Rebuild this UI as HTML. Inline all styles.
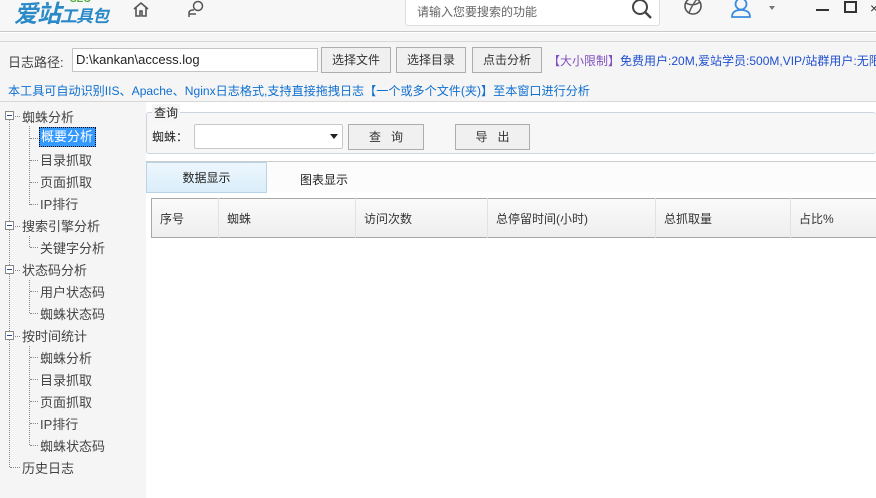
<!DOCTYPE html>
<html><head><meta charset="utf-8"><style>
*{margin:0;padding:0;box-sizing:border-box}
body{width:876px;height:498px;overflow:hidden;background:#fff;font-family:"Liberation Sans","Noto Sans CJK SC",sans-serif;font-size:12px;color:#333;position:relative}
.a{position:absolute}
.btn{position:absolute;border:1px solid #adadad;background:#f0f0f0;text-align:center;font-size:12px;color:#333;line-height:24px;height:26px}
.t{position:absolute;font-size:13px;color:#444;white-space:nowrap}
.dh{position:absolute;border-top:1px dotted #888;width:8px}
.dv{position:absolute;border-left:1px dotted #888}
.bx{position:absolute;width:9px;height:9px;border:1px solid #888;background:#fff}
.bx:after{content:"";position:absolute;left:1px;top:3px;width:5px;height:1px;background:#2a4a9a}
th{font-weight:normal;text-align:left;padding-left:8px;font-size:12px;border-right:1px solid #e2e2e2}
</style></head><body>
<div class="a" style="left:0;top:0;width:876px;height:32px;background:#f7f7f7;border-bottom:1px solid #c8c8c8"></div>
<div class="a" style="left:14px;top:-6px;font-size:24px;font-weight:bold;font-style:italic;color:#2a8ac8;letter-spacing:-1px">爱站<span style="font-size:17px">工具包</span></div>
<div class="a" style="left:70px;top:-6px;font-size:10px;font-weight:bold;color:#4caa3a">SEO</div>
<svg class="a" style="left:132px;top:1px" width="18" height="16" viewBox="0 0 18 16"><path d="M2 8L9 2L16 8M4 6V15H8V10H10V15H14V6" fill="none" stroke="#555" stroke-width="1.6"/></svg>
<svg class="a" style="left:186px;top:0" width="20" height="18" viewBox="0 0 20 18"><circle cx="12" cy="6" r="4.5" fill="none" stroke="#555" stroke-width="1.5"/><path d="M3 17V13Q3 10 7 10H8M3 14H10" fill="none" stroke="#555" stroke-width="1.5"/></svg>
<div class="a" style="left:405px;top:-2px;width:255px;height:28px;background:#fff;border:1px solid #ddd;border-radius:3px"></div>
<div class="a" style="left:417px;top:3px;font-size:12px;color:#666">请输入您要搜索的功能</div>
<svg class="a" style="left:630px;top:-2px" width="24" height="24" viewBox="0 0 24 24"><circle cx="10" cy="9" r="7" fill="none" stroke="#444" stroke-width="2"/><path d="M15 14L21 20" stroke="#444" stroke-width="2.4"/></svg>
<svg class="a" style="left:683px;top:-3px" width="20" height="22" viewBox="0 0 20 22"><circle cx="10" cy="9" r="8" fill="none" stroke="#555" stroke-width="1.6"/><path d="M3 6Q10 10 17 5M6 16Q9 8 14 2" fill="none" stroke="#555" stroke-width="1.4"/></svg>
<svg class="a" style="left:730px;top:-3px" width="22" height="22" viewBox="0 0 22 22"><circle cx="11" cy="7" r="5.5" fill="none" stroke="#3c8de0" stroke-width="1.8"/><path d="M2 20Q2 13 11 13Q20 13 20 20Z" fill="none" stroke="#3c8de0" stroke-width="1.8"/></svg>
<div class="a" style="left:769px;top:6px;border:3px solid transparent;border-top:4px solid #777"></div>
<div class="a" style="left:816px;top:9px;width:13px;height:2px;background:#333"></div>
<div class="a" style="left:844px;top:1px;width:13px;height:12px;border:2px solid #333"></div>
<div class="a" style="left:870px;top:0;font-size:14px;color:#333">×</div>
<div class="a" style="left:0;top:33px;width:876px;height:465px;background:#f5f5f5"></div>
<div class="a" style="left:0;top:41px;width:876px;height:1px;background:#d8d8d8"></div>
<div class="a" style="left:8px;top:52px;font-size:13px;color:#444">日志路径:</div>
<div class="a" style="left:72px;top:48px;width:246px;height:24px;background:#fff;border:1px solid #c4c4c4;padding-left:3px;font-size:13px;line-height:22px;color:#222">D:\kankan\access.log</div>
<div class="btn" style="left:321px;top:47px;width:70px">选择文件</div>
<div class="btn" style="left:396px;top:47px;width:70px">选择目录</div>
<div class="btn" style="left:472px;top:47px;width:70px">点击分析</div>
<div class="a" style="left:548px;top:52px;font-size:12px;color:#2050d0;white-space:nowrap"><span style="color:#8050c0">【大小限制】</span>免费用户:20M,爱站学员:500M,VIP/站群用户:无限</div>
<div class="a" style="left:8px;top:82px;font-size:12.1px;color:#1070d0;white-space:nowrap">本工具可自动识别IIS、Apache、Nginx日志格式,支持直接拖拽日志【一个或多个文件(夹)】至本窗口进行分析</div>
<div class="a" style="left:0;top:101px;width:876px;height:1px;background:#d8d8d8"></div>
<div class="a" style="left:146px;top:102px;width:730px;height:396px;background:#fff"></div>
<div class="a" style="left:146px;top:112px;width:730px;height:42px;border:1px solid #cdd6de;border-right:none;border-radius:3px;background:#f7f7f7"></div>
<div class="a" style="left:152px;top:104px;background:#f5f5f5;padding:0 2px;font-size:12px;color:#222">查询</div>
<div class="a" style="left:152px;top:128px;font-size:12px;color:#222">蜘蛛：</div>
<div class="a" style="left:194px;top:124px;width:149px;height:25px;background:#fff;border:1px solid #c8c8c8;border-radius:2px"></div>
<div class="a" style="left:330px;top:134px;border:4px solid transparent;border-top:5px solid #222"></div>
<div class="btn" style="left:348px;top:124px;width:76px;letter-spacing:10px;padding-left:10px">查询</div>
<div class="btn" style="left:455px;top:124px;width:75px;letter-spacing:10px;padding-left:10px">导出</div>
<div class="a" style="left:146px;top:161px;width:730px;height:1px;background:#ccc"></div>
<div class="a" style="left:146px;top:162px;width:730px;height:30px;background:#fcfcfc"></div>
<div class="a" style="left:146px;top:162px;width:121px;height:31px;background:linear-gradient(#eef6fc,#daeefa);border:1px solid #b8d4e8;text-align:center;line-height:31px;font-size:12px;color:#222">数据显示</div>
<div class="a" style="left:300px;top:171px;font-size:12px;color:#222">图表显示</div>
<table class="a" style="left:151px;top:198px;width:726px;height:40px;border:1px solid #a8a8a8;border-right:none;border-collapse:collapse;background:linear-gradient(#fafafa,#eeeeee)"><tr>
<th style="width:67px">序号</th><th style="width:137px">蜘蛛</th><th style="width:132px">访问次数</th><th style="width:168px">总停留时间(小时)</th><th style="width:135px">总抓取量</th><th style="border:none">占比%</th></tr></table>
<div class="dv" style="left:9px;top:120px;height:347px"></div>
<div class="dv" style="left:29px;top:126px;height:79px"></div>
<div class="dv" style="left:29px;top:236px;height:11px"></div>
<div class="dv" style="left:29px;top:280px;height:33px"></div>
<div class="dv" style="left:29px;top:346px;height:99px"></div>
<div class="bx" style="left:5px;top:111px"></div><div class="dh" style="left:15px;top:116px;width:5px"></div><div class="t" style="left:22px;top:107px">蜘蛛分析</div>
<div class="dh" style="left:30px;top:138px"></div><div class="a" style="left:39px;top:127px;width:57px;height:20px;background:#3399ff;border:1px dotted #000;color:#fff;font-size:13px;padding-left:1px;line-height:18px">概要分析</div>
<div class="dh" style="left:30px;top:160px"></div><div class="t" style="left:40px;top:150px">目录抓取</div>
<div class="dh" style="left:30px;top:182px"></div><div class="t" style="left:40px;top:172px">页面抓取</div>
<div class="dh" style="left:30px;top:204px"></div><div class="t" style="left:40px;top:194px">IP排行</div>
<div class="bx" style="left:5px;top:221px"></div><div class="dh" style="left:15px;top:226px;width:5px"></div><div class="t" style="left:22px;top:216px">搜索引擎分析</div>
<div class="dh" style="left:30px;top:247px"></div><div class="t" style="left:40px;top:238px">关键字分析</div>
<div class="bx" style="left:5px;top:265px"></div><div class="dh" style="left:15px;top:270px;width:5px"></div><div class="t" style="left:22px;top:260px">状态码分析</div>
<div class="dh" style="left:30px;top:291px"></div><div class="t" style="left:40px;top:282px">用户状态码</div>
<div class="dh" style="left:30px;top:313px"></div><div class="t" style="left:40px;top:304px">蜘蛛状态码</div>
<div class="bx" style="left:5px;top:331px"></div><div class="dh" style="left:15px;top:336px;width:5px"></div><div class="t" style="left:22px;top:326px">按时间统计</div>
<div class="dh" style="left:30px;top:357px"></div><div class="t" style="left:40px;top:348px">蜘蛛分析</div>
<div class="dh" style="left:30px;top:379px"></div><div class="t" style="left:40px;top:370px">目录抓取</div>
<div class="dh" style="left:30px;top:401px"></div><div class="t" style="left:40px;top:392px">页面抓取</div>
<div class="dh" style="left:30px;top:423px"></div><div class="t" style="left:40px;top:414px">IP排行</div>
<div class="dh" style="left:30px;top:445px"></div><div class="t" style="left:40px;top:436px">蜘蛛状态码</div>
<div class="dh" style="left:10px;top:467px;width:10px"></div><div class="t" style="left:22px;top:458px">历史日志</div>
</body></html>
